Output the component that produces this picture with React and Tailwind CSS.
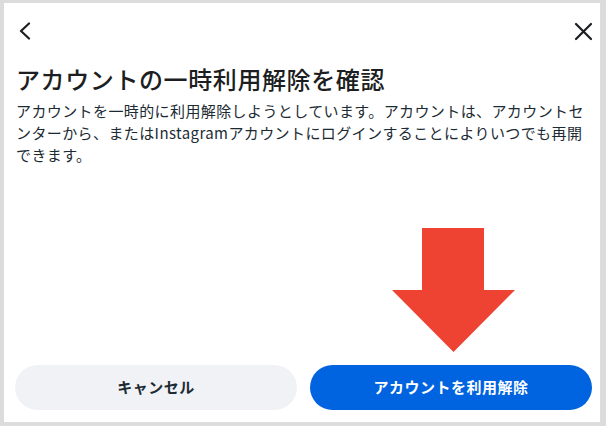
import { useState } from "react";

const jp = { fontFamily: '"Noto Sans CJK JP", "Noto Sans", sans-serif' };

function ChevronLeft() {
  return (
    <svg width="13" height="18" viewBox="0 0 13 18" fill="none">
      <path d="M11 1.5 L3 9 L11 16.5" stroke="#1c1e21" strokeWidth="2.2" strokeLinecap="round" strokeLinejoin="round" />
    </svg>
  );
}

function CloseIcon() {
  return (
    <svg width="19" height="19" viewBox="0 0 19 19" fill="none">
      <path d="M2 2 L17 17 M17 2 L2 17" stroke="#1c1e21" strokeWidth="2.2" strokeLinecap="round" />
    </svg>
  );
}

export default function App() {
  const [open, setOpen] = useState(true);

  return (
    <div className="w-[606px] h-[426px] bg-[#dcdcdc] pt-[3px] pl-[4px] pr-[6px] pb-[4px]" style={jp}>
      <div className="relative h-full bg-white flex flex-col pl-[11px] pr-[8px] pb-[12px]">
        {/* Header */}
        <div className="flex items-center justify-between h-[20px] mt-[18px] pl-[2px] pr-[0px]">
          <button className="flex items-center justify-center w-[16px] h-[20px] -ml-[1px]">
            <ChevronLeft />
          </button>
          <button className="flex items-center justify-center w-[20px] h-[20px] -mr-[1px]" onClick={() => setOpen(!open)}>
            <CloseIcon />
          </button>
        </div>

        {/* Title & body */}
        <h1 className="mt-[22px] pl-[1px] text-[24px] leading-[32px] font-medium tracking-[0.6px] text-[#1c1e21]">
          アカウントの一時利用解除を確認
        </h1>
        <p className="mt-[5px] pl-[1px] pr-[4px] text-[15px] leading-[22px] tracking-[0.4px] text-[#1c2b33]">
          アカウントを一時的に利用解除しようとしています。アカウントは、アカウントセンターから、またはInstagramアカウントにログインすることによりいつでも再開できます。
        </p>

        <div className="flex-1" />

        {/* Buttons */}
        <div className="flex gap-[13px]">
          <button className="flex-1 h-[45px] rounded-full bg-[#f0f2f5] text-[15px] font-bold tracking-[0.5px] text-[#1c2b33]">
            キャンセル
          </button>
          <button className="flex-1 h-[45px] rounded-full bg-[#0064e0] text-[15px] font-bold tracking-[0.5px] text-white">
            アカウントを利用解除
          </button>
        </div>

        {/* Red pointer arrow */}
        <svg className="absolute left-[388px] top-[225px]" width="123" height="124" viewBox="0 0 123 124">
          <polygon points="30,0 92,0 92,62 123,62 61.5,124 0,62 30,62" fill="#ee4332" />
        </svg>
      </div>
    </div>
  );
}
